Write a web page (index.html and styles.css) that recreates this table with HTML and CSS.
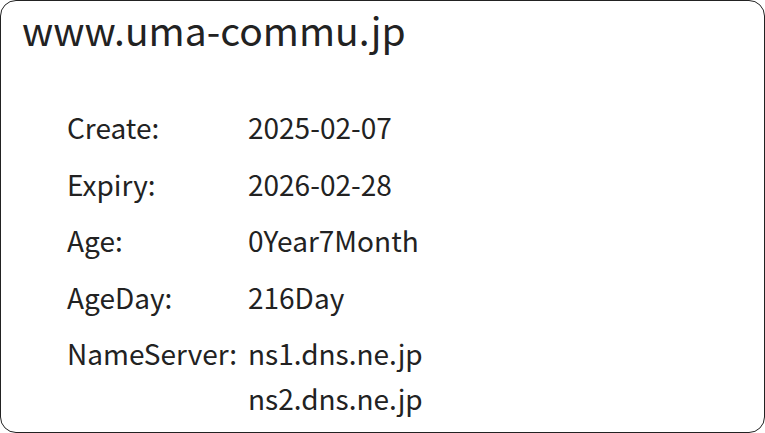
FILE: index.html
```html
<!DOCTYPE html>
<html lang="ja">
<head>
<meta charset="utf-8">
<link rel="stylesheet" href="styles.css">
</head>
<body>
<div class="card">
  <h1 class="domain">www.uma-commu.jp</h1>
  <div class="info">
    <div class="label">Create:</div><div class="value">2025-02-07</div>
    <div class="label">Expiry:</div><div class="value">2026-02-28</div>
    <div class="label">Age:</div><div class="value">0Year7Month</div>
    <div class="label">AgeDay:</div><div class="value">216Day</div>
    <div class="label">NameServer:</div><div class="value ns"><span>ns1.dns.ne.jp</span><span>ns2.dns.ne.jp</span></div>
  </div>
</div>
</body>
</html>
```

FILE: styles.css
```css
html, body {
  margin: 0;
  padding: 0;
  background: #fff;
}
.card {
  box-sizing: border-box;
  width: 765px;
  height: 433px;
  border: 1px solid #222;
  border-radius: 16px;
  padding: 6px 0 0 21px;
  font-family: "Noto Sans CJK JP", "Noto Sans", sans-serif;
  color: #222;
}
.domain {
  margin: 0;
  font-size: 39px;
  font-weight: 400;
  line-height: 44px;
}
.info {
  display: grid;
  grid-template-columns: 181px auto;
  justify-content: start;
  margin: 59px 0 0 45px;
  font-size: 28px;
  row-gap: 21.5px;
  line-height: 35px;
}
.ns {
  display: flex;
  flex-direction: column;
  gap: 10px;
}
```
